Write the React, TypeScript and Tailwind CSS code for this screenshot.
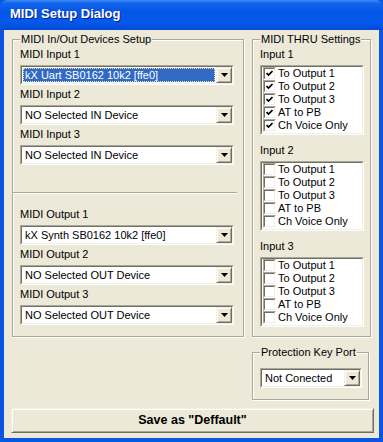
import React from "react";

function Arrow() {
  return (
    <div className="w-[16px] h-full shrink-0 bg-[#ECE9D8] border border-t-[#F1EFE2] border-l-[#F1EFE2] border-r-[#716F64] border-b-[#716F64] shadow-[inset_1px_1px_0_#fff,inset_-1px_-1px_0_#ACA899] flex items-center justify-center">
      <svg width="7" height="4" viewBox="0 0 7 4">
        <path d="M0 0h7L3.5 4z" fill="#000" />
      </svg>
    </div>
  );
}

function Sunken({ children, className = "" }: { children: React.ReactNode; className?: string }) {
  return (
    <div className={`border border-t-[#ACA899] border-l-[#ACA899] border-r-white border-b-white ${className}`}>
      <div className="h-full border border-t-[#716F64] border-l-[#716F64] border-r-[#F1EFE2] border-b-[#F1EFE2] bg-white">
        {children}
      </div>
    </div>
  );
}

function Combo({ text, selected = false }: { text: string; selected?: boolean }) {
  return (
    <Sunken className="h-[20px]">
      <div className="flex h-full items-stretch">
        <div className="flex-1 min-w-0 flex items-stretch p-[1px]">
          {selected ? (
            <div className="flex-1 bg-[#316AC5] text-white flex items-center pl-[1px] border border-dotted border-[#E8E2B0] whitespace-nowrap overflow-hidden">
              {text}
            </div>
          ) : (
            <div className="flex-1 flex items-center pl-[2px] whitespace-nowrap overflow-hidden">{text}</div>
          )}
        </div>
        <Arrow />
      </div>
    </Sunken>
  );
}

function Group({ title, className = "", children }: { title: string; className?: string; children?: React.ReactNode }) {
  return (
    <div className={`relative border border-[#ACA899] shadow-[inset_1px_1px_0_#fff,1px_1px_0_#fff] ${className}`}>
      <span className="absolute left-[7px] top-[-8px] bg-[#ECE9D8] px-[1px] leading-[14px] whitespace-nowrap">{title}</span>
      {children}
    </div>
  );
}

function Check({ checked }: { checked: boolean }) {
  return (
    <div className="w-[13px] h-[13px] shrink-0 bg-white border border-t-[#ACA899] border-l-[#ACA899] border-r-white border-b-white">
      <div className="w-full h-full border border-t-[#716F64] border-l-[#716F64] border-r-[#F1EFE2] border-b-[#F1EFE2] flex items-center justify-center">
        {checked && (
          <svg width="7" height="7" viewBox="0 0 7 7">
            <path d="M0.5 3 L2.5 5 L6.5 1" stroke="#000" strokeWidth="1.7" fill="none" />
          </svg>
        )}
      </div>
    </div>
  );
}

const items = ["To Output 1", "To Output 2", "To Output 3", "AT to PB", "Ch Voice Only"];

function CheckList({ checked }: { checked: boolean }) {
  return (
    <Sunken className="h-[70px]">
      <div className="flex flex-col py-0">
        {items.map((t) => (
          <div key={t} className="h-[13px] flex items-center gap-[2px] pl-[1px] leading-[13px]">
            <Check checked={checked} />
            <span className="whitespace-nowrap">{t}</span>
          </div>
        ))}
      </div>
    </Sunken>
  );
}

function Field({ label, text, selected = false }: { label: string; text: string; selected?: boolean }) {
  return (
    <div className="flex flex-col">
      <div className="h-[14px] leading-[14px]">{label}</div>
      <div className="mt-[4px]">
        <Combo text={text} selected={selected} />
      </div>
    </div>
  );
}

export default function App() {
  return (
    <div className="w-[383px] h-[442px] flex flex-col bg-[#0A55E2] font-['Liberation_Sans',Arial,sans-serif] text-[11px] text-black overflow-hidden">
      <div className="h-[30px] shrink-0 rounded-t-[7px] bg-[linear-gradient(to_bottom,#3D8DF8_0%,#1565EC_10%,#0558E6_35%,#0458EA_75%,#0349D6_100%)] pl-[10px] pt-[6px]">
        <span className="text-white font-bold text-[13px] leading-[15px] [text-shadow:1px_1px_0_#0A1E8A]">MIDI Setup Dialog</span>
      </div>
      <div className="flex-1 mx-[4px] mb-[4px] bg-[#ECE9D8] flex flex-col pl-[8px] pr-[8px] pt-[9px]">
        <div className="flex gap-[8px] h-[298px]">
          <Group title="MIDI In/Out Devices Setup" className="w-[232px] pl-[7px] pr-[9px] pt-[7px] flex flex-col">
            <div className="flex flex-col gap-[2px]">
              <Field label="MIDI Input 1" text="kX Uart SB0162 10k2 [ffe0]" selected />
              <Field label="MIDI Input 2" text="NO Selected IN Device" />
              <Field label="MIDI Input 3" text="NO Selected IN Device" />
            </div>
            <div className="mt-[27px] ml-[-7px] mr-[-3px] h-[2px] border-t border-t-[#ACA899] border-b border-b-white" />
            <div className="mt-[13px] flex flex-col gap-[2px]">
              <Field label="MIDI Output 1" text="kX Synth SB0162 10k2 [ffe0]" />
              <Field label="MIDI Output 2" text="NO Selected OUT Device" />
              <Field label="MIDI Output 3" text="NO Selected OUT Device" />
            </div>
          </Group>
          <Group title="MIDI THRU Settings" className="flex-1 pl-[7px] pr-[6px] pt-[7px] flex flex-col">
            <div className="h-[14px] leading-[14px]">Input 1</div>
            <div className="mt-[4px]">
              <CheckList checked />
            </div>
            <div className="mt-[8px] h-[14px] leading-[14px]">Input 2</div>
            <div className="mt-[4px]">
              <CheckList checked={false} />
            </div>
            <div className="mt-[8px] h-[14px] leading-[14px]">Input 3</div>
            <div className="mt-[4px]">
              <CheckList checked={false} />
            </div>
          </Group>
        </div>
        <div className="flex justify-end mt-[15px] mr-[2px]">
          <Group title="Protection Key Port" className="w-[117px] h-[48px] pl-[7px] pr-[6px] pt-[15px]">
            <Combo text="Not Conected" />
          </Group>
        </div>
        <div className="mt-[8px] ml-[-1px] mr-[-3px]">
          <div className="h-[25px] bg-[#ECE9D8] border border-t-[#F1EFE2] border-l-[#F1EFE2] border-r-[#716F64] border-b-[#716F64] shadow-[inset_1px_1px_0_#fff,inset_-1px_-1px_0_#ACA899] flex items-center justify-center font-bold text-[12.5px]">
            Save as "Deffault"
          </div>
        </div>
      </div>
    </div>
  );
}
